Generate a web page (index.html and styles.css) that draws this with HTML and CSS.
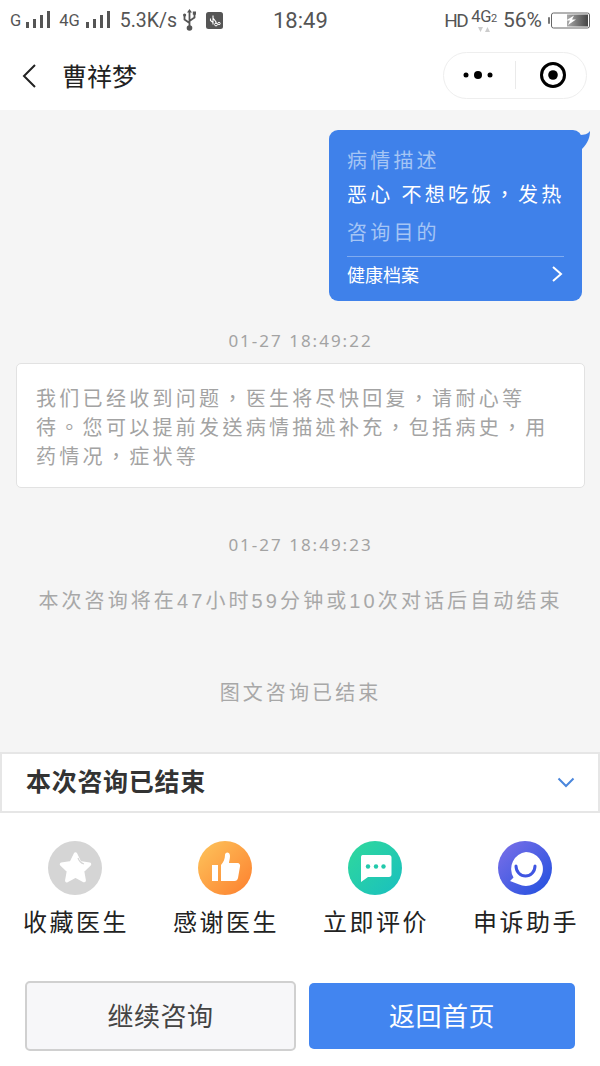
FILE: index.html
```html
<!DOCTYPE html>
<html lang="zh-CN">
<head>
    <meta charset="UTF-8">
    <title>曹祥梦</title>
    <link rel="stylesheet" href="styles.css">
</head>
<body>
<div class="page">
    <!-- 状态栏 -->
    <div class="status">
        <div class="status-left">
            <span class="st-g">G</span>
            <svg class="bars" width="24" height="18" viewBox="0 0 24 18"><path d="M0 11h3v6H0zM7 8h3v9H7zM14 4h3v13h-3zM21 0h3v17h-3z" fill="#555"/></svg>
            <span class="st-4g">4G</span>
            <svg class="bars" width="24" height="18" viewBox="0 0 24 18"><path d="M0 11h3v6H0zM7 8h3v9H7zM14 4h3v13h-3zM21 0h3v17h-3z" fill="#555"/></svg>
            <span class="st-speed">5.3K/s</span>
            <svg class="usb" width="13" height="22" viewBox="0 0 13 22"><path d="M6.500 2v17M1.500 7v3.500l5 3.500M11.500 5v3.500l-5 3.500" fill="none" stroke="#555" stroke-width="1.800"/><path d="M6.500 0l2.500 3.500H4z" fill="#555"/><circle cx="6.500" cy="19" r="2.800" fill="#555"/><circle cx="1.600" cy="6" r="1.600" fill="#555"/><rect x="9.800" y="2.500" width="3.200" height="3.200" fill="#555"/></svg>
            <svg class="debug" width="17" height="17" viewBox="0 0 17 17"><rect width="17" height="17" rx="2.500" fill="#555"/><path d="M7 3.500v9M7 6l3 4v2M4.500 6.500v2L7 10.500" fill="none" stroke="#fff" stroke-width="1.100"/><circle cx="10" cy="12.500" r="1.400" fill="none" stroke="#fff"/><circle cx="13" cy="11.500" r="1.200" fill="none" stroke="#fff"/></svg>
        </div>
        <div class="status-time">18:49</div>
        <div class="status-right">
            <span class="st-hd">HD</span>
            <span class="st-lte">
                <span class="st-lte-text">4G<small>2</small></span>
                <svg width="12" height="6" viewBox="0 0 12 6"><path d="M0 0h5L2.500 5zM7 5h5L9.500 0z" fill="#ccc"/></svg>
            </span>
            <span class="st-pct">56%</span>
            <svg class="battery" width="42" height="17" viewBox="0 0 42 17"><defs><linearGradient id="gBat" x1="0" y1="0" x2="1" y2="0"><stop offset="0" stop-color="#aaa"/><stop offset="1" stop-color="#444"/></linearGradient></defs><rect x="0" y="5" width="2" height="7" rx="1" fill="#777"/><rect x="3.500" y="1" width="38" height="15" rx="2" fill="#fff" stroke="#666"/><rect x="19" y="2.500" width="21" height="12" fill="url(#gBat)"/><path d="M18 8.500l8-5-2 4h4l-8 5.500 2-4.500z" fill="#fff"/></svg>
        </div>
    </div>

    <!-- 导航 -->
    <div class="nav">
        <svg class="nav-back" width="16" height="26" viewBox="0 0 16 26"><path d="M14 2L3 13l11 11" fill="none" stroke="#222" stroke-width="2"/></svg>
        <div class="nav-title">曹祥梦</div>
        <div class="capsule">
            <svg class="cap-more" width="30" height="10" viewBox="0 0 30 10"><circle cx="3" cy="5" r="2.500" fill="#000"/><circle cx="15" cy="5" r="4" fill="#000"/><circle cx="27" cy="5" r="2.500" fill="#000"/></svg>
            <span class="cap-line"></span>
            <svg class="cap-close" width="28" height="28" viewBox="0 0 28 28"><circle cx="14" cy="14" r="11.500" fill="none" stroke="#000" stroke-width="3"/><circle cx="14" cy="14" r="4.800" fill="#000"/></svg>
        </div>
    </div>

    <!-- 聊天内容 -->
    <div class="chat">
        <div class="bubble">
            <svg class="bubble-tail" width="12" height="20" viewBox="0 0 12 20"><path d="M0 5C4 5 8 4 10 1c0 6-2 12-8 18z" fill="#3f81ea"/></svg>
            <div class="b-label">病情描述</div>
            <div class="b-text" lang="zh-TW">恶心 不想吃饭，发热</div>
            <div class="b-label b-label2">咨询目的</div>
            <div class="b-foot">
                <span>健康档案</span>
                <svg width="12" height="18" viewBox="0 0 12 18"><path d="M2 2l8 7-8 7" fill="none" stroke="#fff" stroke-width="2"/></svg>
            </div>
        </div>
        <div class="time time1">01-27 18:49:22</div>
        <div class="notice" lang="zh-TW">我们已经收到问题，医生将尽快回复，请耐心等待。您可以提前发送病情描述补充，包括病史，用药情况，症状等</div>
        <div class="time time2">01-27 18:49:23</div>
        <div class="tip tip1">本次咨询将在47小时59分钟或10次对话后自动结束</div>
        <div class="tip tip2">图文咨询已结束</div>
    </div>

    <!-- 底部 -->
    <div class="ended">
        <span class="ended-text">本次咨询已结束</span>
        <svg width="18" height="11" viewBox="0 0 18 11"><path d="M1.500 1.500L9 9l7.500-7.500" fill="none" stroke="#4a86dc" stroke-width="2"/></svg>
    </div>
    <div class="actions">
        <div class="action">
            <svg width="54" height="54" viewBox="0 0 54 54"><circle cx="27" cy="27" r="27" fill="#d5d5d5"/><path d="M27.500 13l4.300 8.800 9.700 1.400-7 6.800 1.700 9.600-8.700-4.600-8.700 4.600 1.700-9.600-7-6.800 9.700-1.400z" fill="#fff" stroke="#fff" stroke-width="3.500" stroke-linejoin="round"/><path d="M30 17c1 3 3 5 6 6" fill="none" stroke="#d5d5d5" stroke-width="1.200"/></svg>
            <div class="action-name">收藏医生</div>
        </div>
        <div class="action">
            <svg width="54" height="54" viewBox="0 0 54 54"><defs><linearGradient id="gOrange" x1="0" y1="0" x2="1" y2="1"><stop offset="0" stop-color="#fdc55c"/><stop offset="1" stop-color="#fd7f2e"/></linearGradient></defs><circle cx="27" cy="27" r="27" fill="url(#gOrange)"/><path d="M14 24h6v16h-6zM23 40V24c2.500-3 4-6 4-10 0-3.500 5-3.500 5 1 0 3-1 5-1 7h8.500c2 0 3 2 2.500 3.500L40 37c-.5 2-1.500 3-3.500 3z" fill="#fff"/></svg>
            <div class="action-name">感谢医生</div>
        </div>
        <div class="action">
            <svg width="54" height="54" viewBox="0 0 54 54"><defs><linearGradient id="gGreen" x1="0" y1="0" x2="1" y2="1"><stop offset="0" stop-color="#30d99b"/><stop offset="1" stop-color="#19bfc0"/></linearGradient></defs><circle cx="27" cy="27" r="27" fill="url(#gGreen)"/><path d="M14.500 14h26.500c1.500 0 2.500 1 2.500 2.500v17c0 1.500-1 2.500-2.500 2.500H20l-7 5V16.500c0-1.500.5-2.500 1.500-2.500z" fill="#fff"/><circle cx="20" cy="25.500" r="2.200" fill="#22c9ab"/><circle cx="28" cy="25.500" r="2.200" fill="#22c9ab"/><circle cx="35.500" cy="25.500" r="2.200" fill="#22c9ab"/></svg>
            <div class="action-name">立即评价</div>
        </div>
        <div class="action">
            <svg width="54" height="54" viewBox="0 0 54 54"><defs><linearGradient id="gBlue" x1="0" y1="0" x2="1" y2="1"><stop offset="0" stop-color="#7d70e8"/><stop offset="1" stop-color="#1f4fdf"/></linearGradient></defs><circle cx="27" cy="27" r="27" fill="url(#gBlue)"/><path d="M28 11a17 17 0 1 1-7.500 32.300L12 40l3.500-3.500A17 17 0 0 1 28 11z" fill="#fff"/><path d="M18 25c0 6 4.500 10 9.500 10s9.500-4 9.500-10" fill="none" stroke="#3f55e2" stroke-width="3" stroke-linecap="round"/></svg>
            <div class="action-name">申诉助手</div>
        </div>
    </div>
    <div class="btns">
        <div class="btn btn-gray">继续咨询</div>
        <div class="btn btn-blue">返回首页</div>
    </div>
</div>
</body>
</html>
```

FILE: styles.css
```css
*{
    margin: 0;
    padding: 0;
    box-sizing: border-box;
}
html, body{
    width: 600px;
    height: 1066px;
    overflow: hidden;
}
body{
    background-color: #fff;
    font-family: "Liberation Sans", "Noto Sans CJK SC", sans-serif;
}
.page{
    width: 600px;
    height: 1066px;
    display: flex;
    flex-direction: column;
}

/* status bar */
.status{
    height: 40px;
    padding: 0 10px;
    display: flex;
    align-items: center;
    color: #555;
    font-family: "Roboto", "Liberation Sans", sans-serif;
}
.status-left{
    width: 263px;
    display: flex;
    align-items: center;
}
.st-g, .st-4g{
    font-size: 16.500px;
}
.st-g{
    margin-right: 5px;
}
.st-4g{
    margin: 0 6px 0 9px;
}
.st-speed{
    font-size: 19.500px;
    margin-left: 10px;
}
.usb{
    margin-left: 6px;
}
.debug{
    margin-left: 10px;
}
.status-time{
    font-size: 22px;
}
.status-right{
    margin-left: auto;
    display: flex;
    align-items: center;
}
.st-hd{
    font-size: 19px;
    letter-spacing: -1.500px;
}
.st-lte{
    margin: 0 6px 0 4px;
    display: flex;
    flex-direction: column;
    align-items: center;
    font-size: 16.500px;
    line-height: 17px;
}
.st-lte-text{
    letter-spacing: -.3px;
}
.st-lte small{
    font-size: 11px;
}
.st-pct{
    font-size: 21px;
}
.battery{
    margin-left: 6px;
}

/* nav */
.nav{
    height: 70px;
    display: flex;
    align-items: center;
    padding: 0 13px 0 21px;
}
.nav-back{
    margin-top: 2px;
}
.nav-title{
    margin-left: 25px;
    font-size: 25px;
    color: #222;
    flex: 1;
}
.capsule{
    width: 144px;
    height: 47px;
    border: 1px solid #eee;
    border-radius: 24px;
    display: flex;
    align-items: center;
    background-color: #fff;
}
.cap-more{
    margin-left: 19px;
}
.cap-line{
    width: 1px;
    height: 28px;
    background-color: #eaeaea;
    margin-left: 22px;
}
.cap-close{
    margin-left: 23px;
}

/* chat */
.chat{
    height: 642px;
    background-color: #f5f5f5;
    padding: 20px 15px 0 16px;
    display: flex;
    flex-direction: column;
}
.bubble{
    position: relative;
    width: 253px;
    height: 171px;
    margin-left: 313px;
    padding: 17px 18px 0 18px;
    background-color: #3f81ea;
    border-radius: 9px;
}
.bubble-tail{
    position: absolute;
    right: -10px;
    top: 0;
}
.b-label{
    font-size: 20px;
    line-height: 28px;
    letter-spacing: 3.200px;
    color: #a5c5f5;
}
.b-text{
    font-family: "Noto Sans CJK TC", sans-serif;
    font-size: 20px;
    line-height: 28px;
    letter-spacing: 3.300px;
    color: #fff;
    margin-top: 5px;
    white-space: nowrap;
}
.b-label2{
    margin-top: 11px;
}
.b-foot{
    height: 37px;
    margin-top: 9px;
    padding-bottom: 2px;
    border-top: 1px solid #7fabf0;
    display: flex;
    align-items: center;
    justify-content: space-between;
    padding-right: 1px;
    font-size: 18px;
    color: #fff;
}
.time{
    text-align: center;
    font-family: "Noto Sans", "Liberation Sans", sans-serif;
    font-size: 17px;
    line-height: 24px;
    letter-spacing: 2px;
    color: #a3a3a3;
}
.time1{
    margin-top: 28px;
}
.time2{
    margin-top: 45px;
}
.notice{
    margin-top: 10px;
    height: 125px;
    padding: 19px 20px 0 19px;
    background-color: #fff;
    border: 1px solid #e2e2e2;
    border-radius: 5px;
    font-family: "Noto Sans CJK TC", sans-serif;
    font-size: 20px;
    line-height: 29px;
    letter-spacing: 3.300px;
    color: #a3a3a3;
}
.tip{
    text-align: center;
    font-size: 20px;
    line-height: 28px;
    letter-spacing: 3.100px;
    color: #a8a8a8;
    white-space: nowrap;
}
.tip1{
    margin-top: 30px;
}
.tip2{
    margin-top: 64px;
}

/* bottom */
.ended{
    height: 61px;
    border: 2px solid #e6e6e6;
    display: flex;
    align-items: center;
    justify-content: space-between;
    padding: 0 23px 0 24px;
}
.ended-text{
    margin-bottom: 5px;
    font-size: 25px;
    font-weight: bold;
    letter-spacing: .7px;
    color: #333;
}
.actions{
    display: flex;
    padding: 28px 0 0 0;
    height: 168px;
}
.action{
    width: 150px;
    display: flex;
    flex-direction: column;
    align-items: center;
}
.action-name{
    margin-top: 11px;
    font-size: 24px;
    line-height: 34px;
    letter-spacing: 2.500px;
    margin-right: -2px;
    color: #222;
}
.btns{
    display: flex;
    align-items: center;
    padding-left: 25px;
    gap: 13px;
}
.btn{
    height: 70px;
    padding-bottom: 3px;
    display: flex;
    align-items: center;
    justify-content: center;
    border-radius: 5px;
    font-size: 26px;
    letter-spacing: .5px;
}
.btn-gray{
    width: 271px;
    background-color: #f7f7f9;
    border: 2px solid #d0d0d0;
    color: #444;
}
.btn-blue{
    width: 266px;
    height: 66px;
    background-color: #4285f0;
    color: #fff;
}
```
